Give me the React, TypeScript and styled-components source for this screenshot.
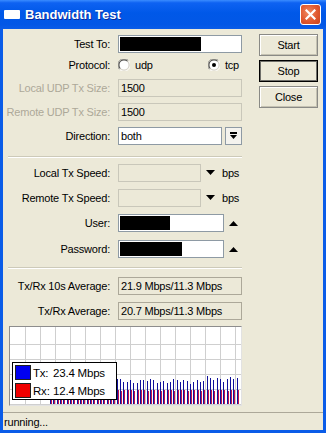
import React from "react";
import styled, { createGlobalStyle } from "styled-components";

const GlobalStyle = createGlobalStyle`
  html, body {
    margin: 0;
    padding: 0;
    background: #ffffff;
  }
  body {
    font-family: "Liberation Sans", Arial, sans-serif;
    font-size: 11px;
    letter-spacing: -0.2px;
    color: #000000;
  }
`;

////// window frame //////
const Window = styled.div`
  width: 326px;
  height: 433px;
  display: flex;
  flex-direction: column;
  background: #0a5ce8;
  overflow: hidden;
`;

const TitleBar = styled.div`
  height: 29px;
  flex: none;
  display: flex;
  align-items: center;
  padding: 0 5px 0 4px;
  box-sizing: border-box;
  background: linear-gradient(
    180deg,
    #3a8cff 0%,
    #0e62f2 10%,
    #0058e8 45%,
    #0257e6 85%,
    #0a5ce8 100%
  );
`;

const TitleIcon = styled.div`
  width: 16px;
  height: 9px;
  background: #ffffff;
  border-radius: 1px;
  margin-right: 5px;
  flex: none;
`;

const TitleText = styled.div`
  flex: 1;
  color: #ffffff;
  font-weight: 700;
  font-size: 13px;
  letter-spacing: 0;
  text-shadow: 1px 1px 0 #0a2a9a;
`;

const CloseButton = styled.div`
  width: 21px;
  height: 21px;
  box-sizing: border-box;
  border: 1px solid #ffffff;
  border-radius: 3px;
  background: radial-gradient(circle at 40% 40%, #f08a62 0%, #e0582f 55%, #c8401c 100%);
  display: flex;
  align-items: center;
  justify-content: center;
`;

const Client = styled.div`
  flex: 1;
  margin: 0 3px 3px;
  background: #ece9d8;
  display: flex;
  flex-direction: column;
  min-height: 0;
`;

const Main = styled.div`
  flex: 1;
  display: flex;
  min-height: 0;
`;

////// form //////
const Form = styled.div`
  width: 239px;
  flex: none;
  display: flex;
  flex-direction: column;
  padding-top: 4px;
`;

const Row = styled.div<{ $h: number }>`
  height: ${(p) => p.$h}px;
  display: grid;
  grid-template-columns: 107px 124px;
  column-gap: 8px;
  align-items: center;
`;

const Label = styled.div<{ $disabled?: boolean }>`
  display: flex;
  justify-content: flex-end;
  white-space: nowrap;
  color: ${(p) => (p.$disabled ? "#aca899" : "#000000")};
`;

const Control = styled.div`
  display: flex;
  align-items: center;
`;

const Field = styled.div<{ $w?: number; $kind?: "edit" | "disabled" | "readonly" }>`
  width: ${(p) => (p.$w ? `${p.$w}px` : "100%")};
  height: 18px;
  box-sizing: border-box;
  flex: none;
  display: flex;
  align-items: center;
  padding: 1px;
  border: 1px solid
    ${(p) => (p.$kind === "disabled" ? "#c9c7ba" : p.$kind === "readonly" ? "#aca899" : "#8e9aa4")};
  background: ${(p) => (p.$kind === "edit" ? "#ffffff" : "#ece9d8")};
  white-space: nowrap;
`;

const FieldText = styled.span`
  padding-left: 1px;
`;

const Mask = styled.div<{ $w: number }>`
  width: ${(p) => p.$w}px;
  height: 100%;
  background: #000000;
`;

const Trail = styled.div`
  margin-left: 5px;
  display: flex;
  align-items: center;
  gap: 7px;
`;

const RadioGroup = styled.div`
  display: flex;
  justify-content: space-between;
  padding-right: 3px;
`;

const RadioItem = styled.div`
  display: flex;
  align-items: center;
  gap: 5px;
`;

const DropButton = styled.div`
  width: 17px;
  height: 18px;
  box-sizing: border-box;
  margin-left: 3px;
  border: 1px solid #8e9aa4;
  background: #f4f3ee;
  display: flex;
  align-items: center;
  justify-content: center;
`;

const Separator = styled.div<{ $top: number; $bottom: number }>`
  margin: ${(p) => p.$top}px 0 ${(p) => p.$bottom}px 5px;
  border-top: 1px solid #cdcab9;
  border-bottom: 1px solid #ffffff;
`;

////// graph //////
const GraphFrame = styled.div`
  position: relative;
  margin: 3px 0 0 6px;
  width: 233px;
  height: 80px;
  box-sizing: border-box;
  border: 1px solid;
  border-color: #8d8d8d #e2e2e2 #e2e2e2 #8d8d8d;
  background: #ffffff;
`;

const Legend = styled.div`
  position: absolute;
  left: 2px;
  top: 35px;
  width: 105px;
  height: 38px;
  box-sizing: border-box;
  border: 1px solid #000000;
  background: #ffffff;
  padding: 2px 0 0 2px;
  display: flex;
  flex-direction: column;
  gap: 3px;
  font-size: 11.5px;
`;

const LegendRow = styled.div`
  display: flex;
  align-items: center;
  height: 15px;
`;

const Swatch = styled.div<{ $color: string }>`
  width: 16px;
  height: 15px;
  box-sizing: border-box;
  border: 1px solid #202020;
  background: ${(p) => p.$color};
  margin-right: 2px;
`;

const LegendKey = styled.span`
  width: 20px;
`;

////// buttons //////
const Buttons = styled.div`
  margin-left: 17px;
  padding-top: 5px;
  display: flex;
  flex-direction: column;
  gap: 4px;
`;

const Button = styled.div<{ $default?: boolean }>`
  width: 59px;
  height: 22px;
  box-sizing: border-box;
  display: flex;
  align-items: center;
  justify-content: center;
  background: #ece9d8;
  border: 1px solid ${(p) => (p.$default ? "#000000" : "#8a8a86")};
  box-shadow: ${(p) =>
    p.$default
      ? "inset 1px 1px 0 #6f6f6a, inset -1px -1px 0 #6f6f6a"
      : "inset 1px 1px 0 #ffffff, inset -1px -1px 0 #c5c2b2"};
`;

const StatusBar = styled.div`
  height: 18px;
  flex: none;
  box-sizing: border-box;
  border-top: 1px solid #aca899;
  padding-left: 1px;
  display: flex;
  align-items: center;
`;

////// drawings //////
const Radio = ({ checked }: { checked?: boolean }) => (
  <svg width="12" height="12" viewBox="0 0 12 12">
    <circle cx="6" cy="6" r="5" fill="#ffffff" />
    <path d="M1.6 10.4 A6 6 0 0 1 10.4 1.6" stroke="#808080" strokeWidth="1" fill="none" />
    <path d="M2.4 9.6 A4.9 4.9 0 0 1 9.6 2.4" stroke="#404040" strokeWidth="1" fill="none" />
    <path d="M10.4 1.6 A6 6 0 0 1 1.6 10.4" stroke="#ffffff" strokeWidth="1" fill="none" />
    <path d="M9.6 2.4 A4.9 4.9 0 0 1 2.4 9.6" stroke="#d4d0c8" strokeWidth="1" fill="none" />
    {checked && <circle cx="6" cy="6" r="2" fill="#000000" />}
  </svg>
);

const ArrowDown = () => (
  <svg width="9" height="5" viewBox="0 0 9 5">
    <path d="M0 0 H9 L4.5 5 Z" fill="#000000" />
  </svg>
);

const ArrowUp = () => (
  <svg width="9" height="5" viewBox="0 0 9 5">
    <path d="M0 5 H9 L4.5 0 Z" fill="#000000" />
  </svg>
);

const DropIcon = () => (
  <svg width="7" height="8" viewBox="0 0 7 8">
    <rect x="0" y="0" width="7" height="2" fill="#000000" />
    <path d="M0 3 H7 L3.5 7 Z" fill="#000000" />
  </svg>
);

const CloseX = () => (
  <svg width="11" height="11" viewBox="0 0 11 11">
    <path d="M1.5 1.5 L9.5 9.5 M9.5 1.5 L1.5 9.5" stroke="#ffffff" strokeWidth="2.2" strokeLinecap="square" />
  </svg>
);

const bars = Array.from({ length: 57 }, (_, i) => {
  const x = Math.round(40 + (i * 10) / 3);
  const tx = Math.round(54 - 1.6 * Math.sin(i * 1.9) - 1.2 * Math.sin(i * 0.7) - (i > 46 ? 2 : 0));
  const rx = 63 + (i % 4 === 1 ? 1 : 0);
  return { x, tx, rx };
});

const Chart = () => (
  <svg width="231" height="78" viewBox="0 0 231 78">
    {Array.from({ length: 15 }, (_, i) => (
      <rect key={`v${i}`} x={15 + i * 15} y={0} width={1} height={78} fill="#cfcfcf" />
    ))}
    {Array.from({ length: 5 }, (_, i) => (
      <rect key={`h${i}`} x={0} y={17 + i * 15} width={231} height={1} fill="#cfcfcf" />
    ))}
    {bars.map((b, i) => (
      <g key={i}>
        <rect x={b.x + 1} y={b.rx} width={1} height={77 - b.rx} fill="#c0124e" />
        <rect x={b.x} y={b.tx} width={1} height={77 - b.tx} fill="#10109a" />
      </g>
    ))}
  </svg>
);

export default function App() {
  return (
    <>
      <GlobalStyle />
      <Window>
        <TitleBar>
          <TitleIcon />
          <TitleText>Bandwidth Test</TitleText>
          <CloseButton>
            <CloseX />
          </CloseButton>
        </TitleBar>
        <Client>
          <Main>
            <Form>
              <Row $h={21}>
                <Label>Test To:</Label>
                <Field $kind="edit">
                  <Mask $w={81} />
                </Field>
              </Row>
              <Row $h={22}>
                <Label>Protocol:</Label>
                <RadioGroup>
                  <RadioItem>
                    <Radio />
                    udp
                  </RadioItem>
                  <RadioItem>
                    <Radio checked />
                    tcp
                  </RadioItem>
                </RadioGroup>
              </Row>
              <Row $h={24}>
                <Label $disabled>Local UDP Tx Size:</Label>
                <Field $kind="disabled">
                  <FieldText>1500</FieldText>
                </Field>
              </Row>
              <Row $h={24}>
                <Label $disabled>Remote UDP Tx Size:</Label>
                <Field $kind="disabled">
                  <FieldText>1500</FieldText>
                </Field>
              </Row>
              <Row $h={24}>
                <Label>Direction:</Label>
                <Control>
                  <Field $kind="edit" $w={104}>
                    <FieldText>both</FieldText>
                  </Field>
                  <DropButton>
                    <DropIcon />
                  </DropButton>
                </Control>
              </Row>

              <Separator $top={8} $bottom={2} />

              <Row $h={25}>
                <Label>Local Tx Speed:</Label>
                <Control>
                  <Field $kind="disabled" $w={83} />
                  <Trail>
                    <ArrowDown />
                    bps
                  </Trail>
                </Control>
              </Row>
              <Row $h={25}>
                <Label>Remote Tx Speed:</Label>
                <Control>
                  <Field $kind="disabled" $w={83} />
                  <Trail>
                    <ArrowDown />
                    bps
                  </Trail>
                </Control>
              </Row>
              <Row $h={26}>
                <Label>User:</Label>
                <Control>
                  <Field $kind="edit" $w={106}>
                    <Mask $w={50} />
                  </Field>
                  <Trail>
                    <ArrowUp />
                  </Trail>
                </Control>
              </Row>
              <Row $h={26}>
                <Label>Password:</Label>
                <Control>
                  <Field $kind="edit" $w={106}>
                    <Mask $w={62} />
                  </Field>
                  <Trail>
                    <ArrowUp />
                  </Trail>
                </Control>
              </Row>

              <Separator $top={5} $bottom={4} />

              <Row $h={25}>
                <Label>Tx/Rx 10s Average:</Label>
                <Field $kind="readonly">
                  <FieldText>21.9 Mbps/11.3 Mbps</FieldText>
                </Field>
              </Row>
              <Row $h={25}>
                <Label>Tx/Rx Average:</Label>
                <Field $kind="readonly">
                  <FieldText>20.7 Mbps/11.3 Mbps</FieldText>
                </Field>
              </Row>

              <GraphFrame>
                <Chart />
                <Legend>
                  <LegendRow>
                    <Swatch $color="#0000f0" />
                    <LegendKey>Tx:</LegendKey>
                    23.4 Mbps
                  </LegendRow>
                  <LegendRow>
                    <Swatch $color="#f00000" />
                    <LegendKey>Rx:</LegendKey>
                    12.4 Mbps
                  </LegendRow>
                </Legend>
              </GraphFrame>
            </Form>
            <Buttons>
              <Button>Start</Button>
              <Button $default>Stop</Button>
              <Button>Close</Button>
            </Buttons>
          </Main>
          <StatusBar>running...</StatusBar>
        </Client>
      </Window>
    </>
  );
}
